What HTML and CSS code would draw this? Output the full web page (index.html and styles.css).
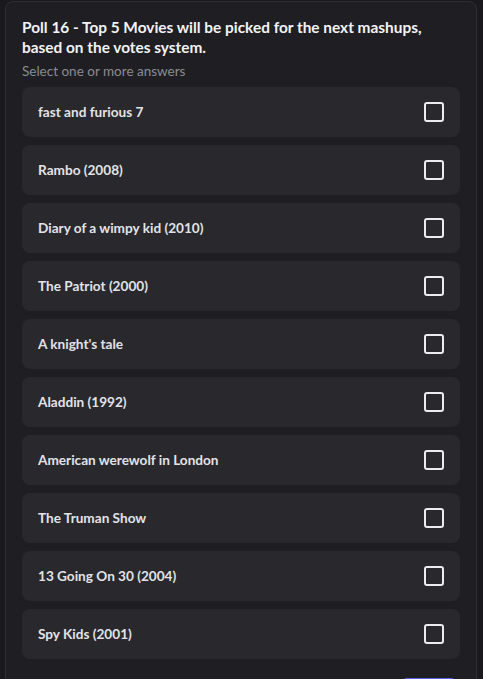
FILE: index.html
```html
<!DOCTYPE html>
<html>
<head>
<meta charset="utf-8">
<link rel="stylesheet" href="styles.css">
</head>
<body>
<div class="poll">
  <div class="question">Poll 16 - Top 5 Movies will be picked for the next mashups, based on the votes system.</div>
  <div class="hint">Select one or more answers</div>
  <ul class="answers">
    <li class="answer"><span class="label">fast and furious 7</span><span class="check"></span></li>
    <li class="answer"><span class="label">Rambo (2008)</span><span class="check"></span></li>
    <li class="answer"><span class="label">Diary of a wimpy kid (2010)</span><span class="check"></span></li>
    <li class="answer"><span class="label">The Patriot (2000)</span><span class="check"></span></li>
    <li class="answer"><span class="label">A knight's tale</span><span class="check"></span></li>
    <li class="answer"><span class="label">Aladdin (1992)</span><span class="check"></span></li>
    <li class="answer"><span class="label">American werewolf in London</span><span class="check"></span></li>
    <li class="answer"><span class="label">The Truman Show</span><span class="check"></span></li>
    <li class="answer"><span class="label">13 Going On 30 (2004)</span><span class="check"></span></li>
    <li class="answer"><span class="label">Spy Kids (2001)</span><span class="check"></span></li>
  </ul>
  <div class="footer"><span class="vote-btn"></span></div>
</div>
</body>
</html>
```
FILE: styles.css
```css
html, body {
  margin: 0;
  padding: 0;
  background: #1a1a1e;
  height: 100%;
  overflow: hidden;
}
body {
  padding: 1px 6px 0 5px;
  font-family: "Lato", "Noto Sans", sans-serif;
}
.poll {
  background: #1f1f23;
  border: 1px solid #2d2d33;
  border-radius: 8px;
  padding: 14px 16px 16px 16px;
  box-sizing: border-box;
  width: 472px;
}
.question {
  color: #f2f3f5;
  font-size: 15.4px;
  font-weight: 700;
  line-height: 20px;
  margin-top: 1px;
}
.hint {
  color: #8b8b93;
  font-size: 13.5px;
  line-height: 16px;
  margin-top: 6px;
}
.answers {
  list-style: none;
  margin: 8px 0 0 0;
  padding: 0;
  display: flex;
  flex-direction: column;
  gap: 8px;
}
.answer {
  background: #28282d;
  border-radius: 8px;
  height: 50px;
  display: flex;
  align-items: center;
  justify-content: space-between;
  padding: 0 16px;
}
.label {
  color: #e2e3e7;
  font-size: 13.6px;
  font-weight: 700;
}
.check {
  width: 16px;
  height: 16px;
  border: 2px solid #ececef;
  border-radius: 3px;
}
.footer {
  display: flex;
  justify-content: flex-end;
  padding-top: 19px;
  padding-right: 5px;
}
.vote-btn {
  width: 52px;
  height: 32px;
  background: #5865f2;
  border-radius: 4px;
}
```
